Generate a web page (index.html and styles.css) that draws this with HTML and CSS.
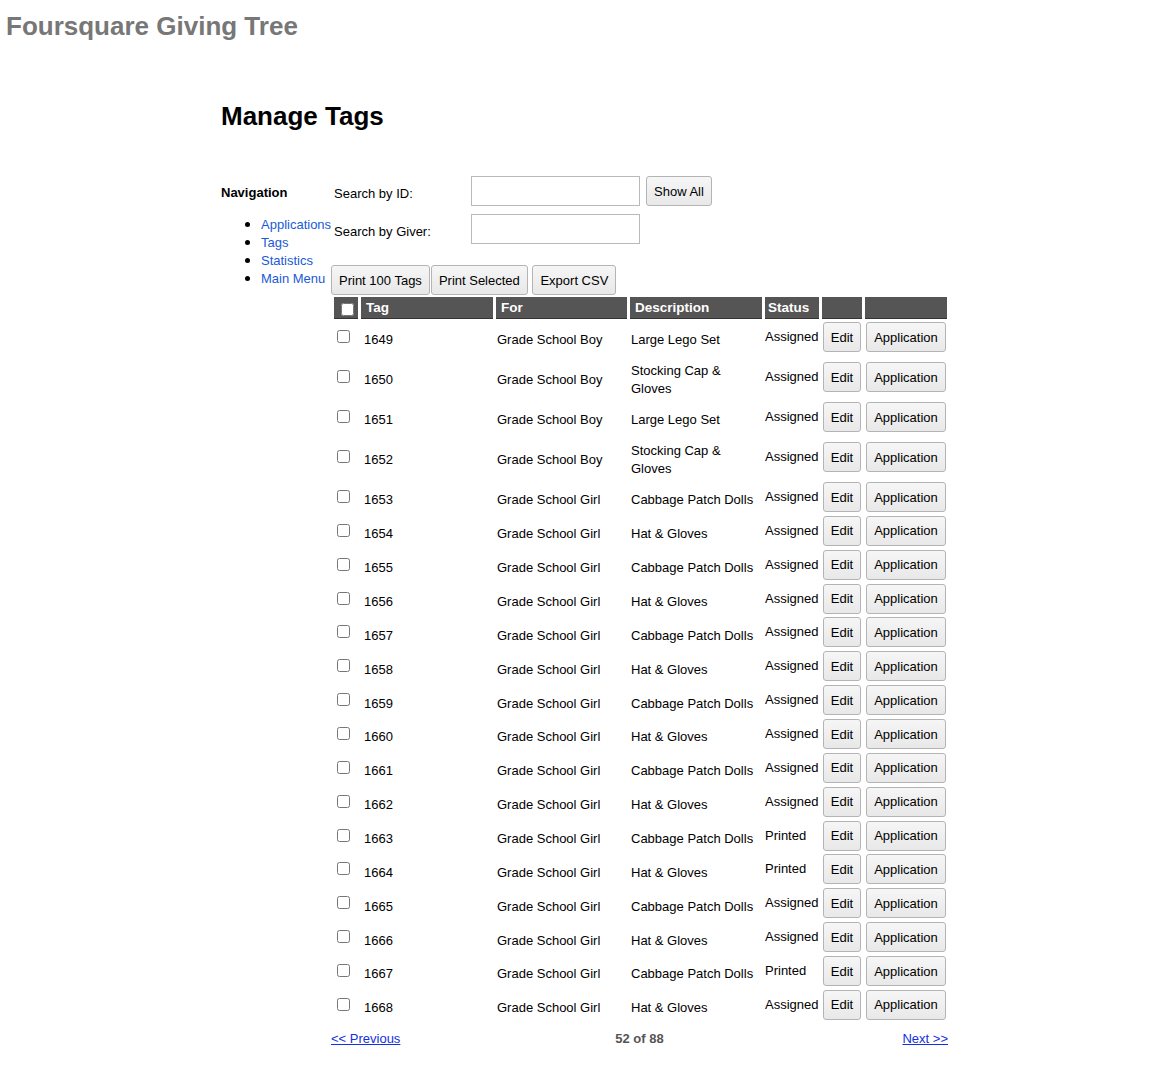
FILE: index.html
```html
<!DOCTYPE html>
<html>
<head>
<meta charset="utf-8">
<title>Manage Tags</title>
<link rel="stylesheet" href="styles.css">
</head>
<body>
<div class="site-title">Foursquare Giving Tree</div>
<div class="container">
  <h1 class="page-title">Manage Tags</h1>
  <div class="layout">
    <div class="nav">
      <h3 class="nav-title">Navigation</h3>
      <ul class="nav-list">
        <li><a href="#">Applications</a></li>
        <li><a href="#">Tags</a></li>
        <li><a href="#">Statistics</a></li>
        <li><a href="#">Main Menu</a></li>
      </ul>
    </div>
    <div class="main">
      <div class="search">
        <label class="search-label">Search by ID:</label>
        <div class="search-field"><input type="text" class="text-input"><button class="btn">Show All</button></div>
        <label class="search-label">Search by Giver:</label>
        <div class="search-field"><input type="text" class="text-input"></div>
      </div>
      <div class="actions">
        <button class="btn">Print 100 Tags</button><button class="btn">Print Selected</button> <button class="btn btn-gap">Export CSV</button>
      </div>
      <table class="tags">
        <thead>
          <tr>
            <th class="c-check"><input type="checkbox" class="cb cb-head"></th>
            <th class="c-tag">Tag</th>
            <th class="c-for">For</th>
            <th class="c-desc">Description</th>
            <th class="c-status">Status</th>
            <th class="c-edit"></th>
            <th class="c-app"></th>
          </tr>
        </thead>
        <tbody>
          <tr class="tall"><td class="c-check"><input type="checkbox" class="cb"></td><td class="c-tag">1649</td><td>Grade School Boy</td><td>Large Lego Set</td><td class="c-status">Assigned</td><td class="c-edit"><button class="btn btn-edit">Edit</button></td><td class="c-app"><button class="btn btn-app">Application</button></td></tr>
          <tr class="tall"><td class="c-check"><input type="checkbox" class="cb"></td><td class="c-tag">1650</td><td>Grade School Boy</td><td>Stocking Cap &amp; Gloves</td><td class="c-status">Assigned</td><td class="c-edit"><button class="btn btn-edit">Edit</button></td><td class="c-app"><button class="btn btn-app">Application</button></td></tr>
          <tr class="tall"><td class="c-check"><input type="checkbox" class="cb"></td><td class="c-tag">1651</td><td>Grade School Boy</td><td>Large Lego Set</td><td class="c-status">Assigned</td><td class="c-edit"><button class="btn btn-edit">Edit</button></td><td class="c-app"><button class="btn btn-app">Application</button></td></tr>
          <tr class="tall"><td class="c-check"><input type="checkbox" class="cb"></td><td class="c-tag">1652</td><td>Grade School Boy</td><td>Stocking Cap &amp; Gloves</td><td class="c-status">Assigned</td><td class="c-edit"><button class="btn btn-edit">Edit</button></td><td class="c-app"><button class="btn btn-app">Application</button></td></tr>
          <tr><td class="c-check"><input type="checkbox" class="cb"></td><td class="c-tag">1653</td><td>Grade School Girl</td><td>Cabbage Patch Dolls</td><td class="c-status">Assigned</td><td class="c-edit"><button class="btn btn-edit">Edit</button></td><td class="c-app"><button class="btn btn-app">Application</button></td></tr>
          <tr><td class="c-check"><input type="checkbox" class="cb"></td><td class="c-tag">1654</td><td>Grade School Girl</td><td>Hat &amp; Gloves</td><td class="c-status">Assigned</td><td class="c-edit"><button class="btn btn-edit">Edit</button></td><td class="c-app"><button class="btn btn-app">Application</button></td></tr>
          <tr><td class="c-check"><input type="checkbox" class="cb"></td><td class="c-tag">1655</td><td>Grade School Girl</td><td>Cabbage Patch Dolls</td><td class="c-status">Assigned</td><td class="c-edit"><button class="btn btn-edit">Edit</button></td><td class="c-app"><button class="btn btn-app">Application</button></td></tr>
          <tr><td class="c-check"><input type="checkbox" class="cb"></td><td class="c-tag">1656</td><td>Grade School Girl</td><td>Hat &amp; Gloves</td><td class="c-status">Assigned</td><td class="c-edit"><button class="btn btn-edit">Edit</button></td><td class="c-app"><button class="btn btn-app">Application</button></td></tr>
          <tr><td class="c-check"><input type="checkbox" class="cb"></td><td class="c-tag">1657</td><td>Grade School Girl</td><td>Cabbage Patch Dolls</td><td class="c-status">Assigned</td><td class="c-edit"><button class="btn btn-edit">Edit</button></td><td class="c-app"><button class="btn btn-app">Application</button></td></tr>
          <tr><td class="c-check"><input type="checkbox" class="cb"></td><td class="c-tag">1658</td><td>Grade School Girl</td><td>Hat &amp; Gloves</td><td class="c-status">Assigned</td><td class="c-edit"><button class="btn btn-edit">Edit</button></td><td class="c-app"><button class="btn btn-app">Application</button></td></tr>
          <tr><td class="c-check"><input type="checkbox" class="cb"></td><td class="c-tag">1659</td><td>Grade School Girl</td><td>Cabbage Patch Dolls</td><td class="c-status">Assigned</td><td class="c-edit"><button class="btn btn-edit">Edit</button></td><td class="c-app"><button class="btn btn-app">Application</button></td></tr>
          <tr><td class="c-check"><input type="checkbox" class="cb"></td><td class="c-tag">1660</td><td>Grade School Girl</td><td>Hat &amp; Gloves</td><td class="c-status">Assigned</td><td class="c-edit"><button class="btn btn-edit">Edit</button></td><td class="c-app"><button class="btn btn-app">Application</button></td></tr>
          <tr><td class="c-check"><input type="checkbox" class="cb"></td><td class="c-tag">1661</td><td>Grade School Girl</td><td>Cabbage Patch Dolls</td><td class="c-status">Assigned</td><td class="c-edit"><button class="btn btn-edit">Edit</button></td><td class="c-app"><button class="btn btn-app">Application</button></td></tr>
          <tr><td class="c-check"><input type="checkbox" class="cb"></td><td class="c-tag">1662</td><td>Grade School Girl</td><td>Hat &amp; Gloves</td><td class="c-status">Assigned</td><td class="c-edit"><button class="btn btn-edit">Edit</button></td><td class="c-app"><button class="btn btn-app">Application</button></td></tr>
          <tr><td class="c-check"><input type="checkbox" class="cb"></td><td class="c-tag">1663</td><td>Grade School Girl</td><td>Cabbage Patch Dolls</td><td class="c-status">Printed</td><td class="c-edit"><button class="btn btn-edit">Edit</button></td><td class="c-app"><button class="btn btn-app">Application</button></td></tr>
          <tr><td class="c-check"><input type="checkbox" class="cb"></td><td class="c-tag">1664</td><td>Grade School Girl</td><td>Hat &amp; Gloves</td><td class="c-status">Printed</td><td class="c-edit"><button class="btn btn-edit">Edit</button></td><td class="c-app"><button class="btn btn-app">Application</button></td></tr>
          <tr><td class="c-check"><input type="checkbox" class="cb"></td><td class="c-tag">1665</td><td>Grade School Girl</td><td>Cabbage Patch Dolls</td><td class="c-status">Assigned</td><td class="c-edit"><button class="btn btn-edit">Edit</button></td><td class="c-app"><button class="btn btn-app">Application</button></td></tr>
          <tr><td class="c-check"><input type="checkbox" class="cb"></td><td class="c-tag">1666</td><td>Grade School Girl</td><td>Hat &amp; Gloves</td><td class="c-status">Assigned</td><td class="c-edit"><button class="btn btn-edit">Edit</button></td><td class="c-app"><button class="btn btn-app">Application</button></td></tr>
          <tr><td class="c-check"><input type="checkbox" class="cb"></td><td class="c-tag">1667</td><td>Grade School Girl</td><td>Cabbage Patch Dolls</td><td class="c-status">Printed</td><td class="c-edit"><button class="btn btn-edit">Edit</button></td><td class="c-app"><button class="btn btn-app">Application</button></td></tr>
          <tr><td class="c-check"><input type="checkbox" class="cb"></td><td class="c-tag">1668</td><td>Grade School Girl</td><td>Hat &amp; Gloves</td><td class="c-status">Assigned</td><td class="c-edit"><button class="btn btn-edit">Edit</button></td><td class="c-app"><button class="btn btn-app">Application</button></td></tr>
        </tbody>
      </table>
      <div class="pager">
        <a href="#" class="pager-prev">&lt;&lt; Previous</a>
        <span class="pager-count">52 of 88</span>
        <a href="#" class="pager-next">Next &gt;&gt;</a>
      </div>
    </div>
  </div>
</div>
</body>
</html>
```
FILE: styles.css
```css
html, body {
  margin: 0;
  padding: 0;
  background: #fff;
}
body {
  font-family: "Liberation Sans", Arial, Helvetica, sans-serif;
  font-size: 13px;
  line-height: 18px;
  color: #000;
}
.site-title {
  margin: 11px 0 0 6px;
  font-size: 26px;
  line-height: 30px;
  font-weight: bold;
  color: #777;
}
.container {
  width: 728px;
  margin: 0 auto;
}
.page-title {
  margin: 60px 0 0 0;
  font-size: 26px;
  line-height: 30px;
  font-weight: bold;
}
.layout {
  display: flex;
  margin-top: 45px;
}
.nav {
  width: 110px;
  flex: none;
}
.nav-title {
  margin: 8px 0 0 0;
  font-size: 13px;
  line-height: 18px;
  font-weight: bold;
}
.nav-list {
  margin: 13px 0 0 0;
  padding-left: 40px;
  list-style: disc;
}
.nav-list li {
  height: 18px;
  line-height: 18px;
}
.nav-list li::marker {
  font-size: 16px;
}
.nav-list a {
  color: #1a5ad6;
  text-decoration: none;
  white-space: nowrap;
}
.main {
  flex: 1;
}
.search {
  display: grid;
  grid-template-columns: 140px auto;
  row-gap: 8px;
  align-items: center;
}
.search-label {
  padding: 6px 0 0 3px;
}
.search-field {
  display: flex;
  align-items: center;
}
.text-input {
  box-sizing: border-box;
  width: 169px;
  height: 30px;
  margin: 0;
  border: 1px solid #b9b9b9;
  padding: 2px 4px;
  font-family: inherit;
  font-size: 13px;
  background: #fff;
}
.btn {
  box-sizing: border-box;
  height: 30px;
  margin: 0;
  padding: 0 7px;
  border: 1px solid #b4b4b4;
  border-radius: 3px;
  background: linear-gradient(#f6f6f6, #e8e8e8);
  font-family: inherit;
  font-size: 13px;
  color: #000;
  vertical-align: top;
}
.search-field .btn {
  margin-left: 6px;
}
.actions {
  margin-top: 21px;
  height: 30px;
  white-space: nowrap;
}
.actions .btn {
  margin-right: 1px;
}
.tags {
  border-collapse: separate;
  border-spacing: 3px 2px;
  margin-left: 0;
  table-layout: fixed;
  width: 619px;
}
.tags th,
.tags td {
  box-sizing: border-box;
}
.tags th {
  height: 22px;
  padding: 0 5px;
  background: #555;
  color: #fff;
  font-weight: bold;
  font-size: 13.5px;
  text-align: left;
  border-bottom: 1px solid #333;
}
.tags td {
  height: 31.87px;
  padding: 7px 1px 0 1px;
  vertical-align: middle;
}
.tags tr.tall td {
  height: 38px;
  padding-top: 0;
}
.c-check { width: 24px; }
.c-tag { width: 132px; }
.c-for { width: 131px; }
.c-desc { width: 132px; }
.c-status { width: 54px; }
.c-edit { width: 40px; }
.c-app { width: 82px; }
.tags th.c-check,
.tags td.c-check,
.tags tr.tall td.c-check {
  padding: 0;
}
.tags td.c-check {
  vertical-align: top;
}
.tags th.c-status,
.tags th.c-edit,
.tags th.c-app {
  padding: 0 3px;
}
.tags td.c-tag {
  padding-left: 3px;
}
.tags td.c-status,
.tags tr.tall td.c-status {
  padding: 1px 0 0 0;
  vertical-align: top;
  line-height: 30px;
  white-space: nowrap;
}
.tags td.c-edit,
.tags td.c-app,
.tags tr.tall td.c-edit,
.tags tr.tall td.c-app {
  padding: 0;
  vertical-align: top;
  text-align: center;
}
.cb {
  width: 13px;
  height: 13px;
  margin: 9px 0 0 3px;
  vertical-align: top;
}
.cb-head {
  margin: 4px 0 0 7px;
}
.btn-edit {
  width: 38px;
  padding: 0;
  margin-top: 1px;
}
.btn-app {
  width: 80px;
  padding: 0;
  margin-top: 1px;
}
.pager {
  display: grid;
  grid-template-columns: 1fr auto 1fr;
  width: 617px;
  margin-top: 7px;
}
.pager a {
  color: #1530e0;
  text-decoration: underline;
}
.pager-next {
  justify-self: end;
}
.pager-count {
  font-weight: bold;
  color: #555;
}
```
